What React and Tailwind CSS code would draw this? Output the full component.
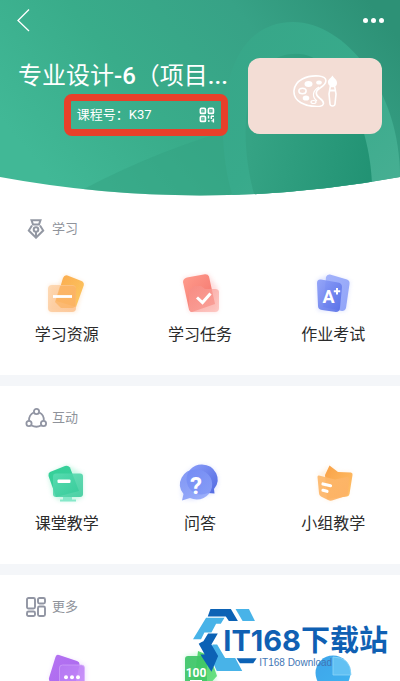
function HeaderBackground() {
  return (
    <svg
      className="absolute inset-0 h-full w-full"
      viewBox="0 0 400 198"
      preserveAspectRatio="none"
      aria-hidden="true"
    >
      <defs>
        <linearGradient id="base" x1="0" y1="0.6" x2="1" y2="0.2">
          <stop offset="0" stopColor="#41b896" />
          <stop offset="0.35" stopColor="#39ac8a" />
          <stop offset="0.7" stopColor="#37a286" />
          <stop offset="1" stopColor="#2d9176" />
        </linearGradient>
        <linearGradient id="arch" x1="0" y1="0" x2="1" y2="1">
          <stop offset="0" stopColor="#37a688" />
          <stop offset="0.5" stopColor="#38aa8b" />
          <stop offset="1" stopColor="#48af93" />
        </linearGradient>
        <linearGradient id="hole" x1="0" y1="0.8" x2="1" y2="1">
          <stop offset="0" stopColor="#35a384" />
          <stop offset="1" stopColor="#219273" />
        </linearGradient>
        <clipPath id="curve">
          <path d="M0 0H400V178Q300 196.500 200 196.500T0 178Z" />
        </clipPath>
      </defs>
      <g clipPath="url(#curve)">
        <rect width="400" height="198" fill="url(#base)" />
        <path d="M84 190Q160 150 240 128V198H84Z" fill="#33a281" opacity="0.5" />
        <path
          d="M233 198C214 140 216 22 293 22C345 22 400 90 400 178V198Z"
          fill="url(#arch)"
        />
        <path
          d="M255 198C240 150 236 54 296 54C340 54 374 130 372 198Z"
          fill="url(#hole)"
        />
      </g>
    </svg>
  )
}

function BackIcon() {
  return (
    <svg className="h-6 w-4" viewBox="0 0 16 24" fill="none" stroke="#fff" strokeWidth="1.300" aria-hidden="true">
      <path d="M13 1.500L2 12.500L13 23" />
    </svg>
  )
}

function QrIcon() {
  return (
    <svg className="h-4 w-4" viewBox="0 0 16 16" fill="none" stroke="#fff" strokeWidth="1.700" aria-hidden="true">
      <rect x="1.400" y="1.400" width="5" height="5" rx="1" />
      <rect x="9.400" y="1.400" width="5" height="5" rx="1" />
      <rect x="1.400" y="9.400" width="5" height="5" rx="1" />
      <path d="M3.400 3.900h1M11.400 3.900h1M3.400 11.900h1" strokeWidth="1" />
      <path d="M9.500 8.500v3M12 9.300h3M12.300 9v3M9 14h1.600M12.500 13.800h1M14.400 11.500v4" strokeWidth="1.400" />
    </svg>
  )
}

function PaletteIcon() {
  return (
    <svg className="h-8 w-11" viewBox="0 0 44 32" fill="none" stroke="#fff" strokeWidth="1.600" aria-hidden="true">
      <path d="M26 1C14 0 2 5 1 15.500C0 27 13 31.500 24 31.500C32 31.500 32 27 27 23.500C22 20 22 16 27 13C35 8 35 2 26 1Z" />
      <path d="M26 12C19 16 19 22 24 26" strokeWidth="1.200" />
      <ellipse cx="15.500" cy="9" rx="4" ry="3" fill="#fff" stroke="none" />
      <ellipse cx="26" cy="7.500" rx="2.800" ry="2" fill="#fff" stroke="none" />
      <ellipse cx="9.500" cy="16" rx="3.600" ry="2.700" />
      <ellipse cx="13" cy="23" rx="3.300" ry="2.600" fill="#fff" stroke="none" />
      <ellipse cx="20.500" cy="27" rx="2.500" ry="1.500" strokeWidth="1.200" />
      <path d="M39.500 0.500C37 4 34.500 4.500 35 8Q35.500 11 37.500 11.500H41.500Q44 11 44 8C44 4.500 41.500 4 39.500 0.500Z" fill="#fff" stroke="none" />
      <path d="M37.300 11.500L36 19L37 29Q37.300 31 39.500 31T42 29L43 19L41.700 11.500Z" />
      <path d="M36.500 15.500H42.500" strokeWidth="2" />
    </svg>
  )
}

function PenIcon() {
  return (
    <svg className="h-5 w-5" viewBox="0 0 20 20" fill="none" stroke="#9398a3" strokeWidth="2" aria-hidden="true">
      <path d="M5.500 1.200H14.500L13 5.500H7Z" />
      <path d="M6 6.500L2.800 11.500L10 18.700L17.200 11.500L14 6.500" />
      <circle cx="10" cy="10.500" r="2.300" />
      <path d="M10 13V18" />
    </svg>
  )
}

function ShareIcon() {
  return (
    <svg className="h-5 w-5 overflow-visible" viewBox="0 0 20 20" fill="none" stroke="#9195a3" strokeWidth="1.800" aria-hidden="true">
      <circle cx="10.500" cy="3.500" r="2.600" />
      <circle cx="3" cy="15.500" r="2.600" />
      <circle cx="17.500" cy="15.500" r="2.600" />
      <path d="M7.700 4.500C4.500 6 3 9 3 12.500M13.300 4.500C16.500 6 18 9 17.800 12.500M5.500 17.500Q10.500 20 15 17.500" />
    </svg>
  )
}

function GridIcon() {
  return (
    <svg className="h-5 w-5" viewBox="0 0 20 20" fill="none" stroke="#9195a3" strokeWidth="1.900" aria-hidden="true">
      <rect x="1" y="1" width="8" height="10.500" rx="1.500" />
      <rect x="12" y="1" width="7" height="5.500" rx="1.500" />
      <rect x="1" y="14.500" width="8" height="4.500" rx="1.500" />
      <rect x="12" y="9.500" width="7" height="9.500" rx="1.500" />
    </svg>
  )
}

// common frame of the coloured tile icons
function Tile({ children }) {
  return (
    <svg className="h-10 w-10 overflow-visible" viewBox="0 0 40 40" fill="none" aria-hidden="true">
      {children}
    </svg>
  )
}

function Gradient({ id, from, to }) {
  return (
    <linearGradient id={id} x1="0" y1="0" x2="1" y2="1">
      <stop offset="0" stopColor={from} />
      <stop offset="1" stopColor={to} />
    </linearGradient>
  )
}

// soft coloured halo behind the tiles
function Glow({ color, d }) {
  return <path d={d} fill={color} opacity="0.350" className="blur-[2px]" />
}

function ResourceIcon() {
  return (
    <Tile>
      <defs>
        <Gradient id="res1" from="#fba94e" to="#fccb62" />
        <Gradient id="res2" from="#fdcfa0" to="#fbb77d" />
      </defs>
      <Glow color="#fdba74" d="M2 11H12L18 1L37 9L29 38H2Z" />
      <path d="M20.500 1.500L34.500 7Q37.500 8.500 36.700 11.500L29 33L9 27L16 4Q17.500 0.500 20.500 1.500Z" fill="url(#res1)" />
      <rect x="1" y="11" width="28" height="27" rx="4" fill="url(#res2)" opacity="0.700" />
      <path d="M13 12L8 28L14 34H25Q28 34 28.500 31L29 14Q28 12 26 12Z" fill="#fbad55" opacity="0.600" />
      <path d="M6 22.500H25" stroke="#fff" strokeWidth="2.800" />
    </Tile>
  )
}

function TaskIcon() {
  return (
    <Tile>
      <defs>
        <Gradient id="task1" from="#ff9c8c" to="#f2716b" />
        <Gradient id="task2" from="#f68a82" to="#fdb9b2" />
      </defs>
      <Glow color="#fca5a5" d="M3 4L28 0L38 14V38H9Z" />
      <path d="M7 3.500L25 0.200Q28 0 29 2.500L35 30L12 38Q10 38 9 35.500L3 8Q3 4.500 7 3.500Z" fill="url(#task1)" />
      <path d="M14 12H21L25 15H35Q39 15 39 18V34Q39 38 35 38H13Q9 38 9 34V17Z" fill="url(#task2)" opacity="0.700" />
      <path d="M17 23.500L22.500 28.500L30.500 19.500" stroke="#fff" strokeWidth="3" />
    </Tile>
  )
}

function ExamIcon() {
  return (
    <Tile>
      <defs>
        <Gradient id="exam1" from="#a5b4fb" to="#8fa3f8" />
        <Gradient id="exam2" from="#8c9ef8" to="#526be5" />
      </defs>
      <Glow color="#a5b4fc" d="M4 6L15 1L37 7L33 37H5Z" />
      <path d="M17 0.500L34 5.500Q37 6.500 36.500 10L33 34Q32 37 29 37L10 33L13 3Q14 0 17 0.500Z" fill="url(#exam1)" />
      <path d="M8 5.500L25 8.500Q29 9 29 13L27 34Q26.500 38 23 38L9 36Q5 35.500 5 32L4 9Q4 5 8 5.500Z" fill="url(#exam2)" opacity="0.900" />
      <text x="9.500" y="29" fill="#fff" fontSize="18" fontWeight="700" fontFamily="Roboto, sans-serif">A</text>
      <path d="M24 14V20.500M20.800 17.200H27.200" stroke="#fff" strokeWidth="2" />
    </Tile>
  )
}

function ClassIcon() {
  return (
    <Tile>
      <defs>
        <Gradient id="cls1" from="#35d098" to="#3bcf9e" />
        <Gradient id="cls2" from="#5bddb3" to="#35c998" />
      </defs>
      <Glow color="#6ee7b7" d="M1 11L20 2L36 11V34L28 38H13L6 33Z" />
      <path d="M3 9L18 3Q21 2 23 4.500L32 28L9 34L1.500 13Q1 10 3 9Z" fill="url(#cls1)" />
      <rect x="6" y="10.500" width="30" height="23.500" rx="3" fill="url(#cls2)" opacity="0.850" />
      <path d="M16 34H25V36.500H29V38.500H13V36.500H16Z" fill="#86e8c9" />
      <rect x="10.500" y="16.500" width="13" height="3.500" rx="1" fill="#fff" />
    </Tile>
  )
}

function QuestionIcon() {
  return (
    <Tile>
      <defs>
        <Gradient id="qa1" from="#8da0fa" to="#5068e0" />
        <Gradient id="qa2" from="#6d86f2" to="#93a8fb" />
      </defs>
      <Glow color="#a5b4fc" d="M2 36L1 20Q8 2 24 2Q38 4 38 20L34 30L14 37Z" />
      <path d="M22 1.500A16 15 0 0 1 34 26L34.500 30.500L28 30A15 15 0 1 1 22 1.500Z" fill="url(#qa1)" />
      <path d="M16 6.500A15.500 15 0 1 1 10 35L2 37.500L3.500 31A15.500 15 0 0 1 16 6.500Z" fill="url(#qa2)" opacity="0.850" />
      <text x="10" y="31" fill="#fff" fontSize="24" fontWeight="700" fontFamily="Roboto, sans-serif">?</text>
    </Tile>
  )
}

function GroupIcon() {
  return (
    <Tile>
      <defs>
        <Gradient id="grp1" from="#f9a146" to="#ffc26b" />
        <Gradient id="grp2" from="#fdb96c" to="#fdb164" />
      </defs>
      <Glow color="#fed7aa" d="M5 12L17 3L25 9L39 10L35 32L17 38L6 32Z" />
      <path d="M16.500 2.500L25 9L38 9.500Q40 10 39.500 12L36.500 31Q36 33 34 33.500L14 36L12 12Z" fill="url(#grp1)" />
      <path d="M6 12.500L22 16.500L34 14Q36 14 36 16L35 30Q35 32 33 33L19 37.500Q17 38 15 37L8 33.500Q6 32.500 6 30L4.500 14Q4.500 12 6 12.500Z" fill="url(#grp2)" opacity="0.920" />
      <path d="M10 21L17.500 22.700M10 27.300L14 28.300" stroke="#fff" strokeWidth="3.200" strokeLinecap="round" />
    </Tile>
  )
}

function MessageIcon() {
  return (
    <Tile>
      <defs>
        <Gradient id="msg1" from="#b573f2" to="#a968ee" />
        <Gradient id="msg2" from="#b57af3" to="#c98cfb" />
      </defs>
      <Glow color="#d8b4fe" d="M2 27L9 3L32 10L39 14V40H12Z" />
      <path d="M12 3L30 9Q33 10 32.500 13L27 38L4 30Q1.500 29 2 26L8.500 5Q9.500 2 12 3Z" fill="url(#msg1)" />
      <rect x="12.500" y="13" width="25" height="27" rx="3" fill="url(#msg2)" stroke="#d4a9fb" strokeWidth="0.700" opacity="0.900" />
      <g fill="#fff">
        <circle cx="19" cy="25.300" r="2" />
        <circle cx="25" cy="25.300" r="2" />
        <circle cx="31" cy="25.300" r="2" />
      </g>
    </Tile>
  )
}

function ScoreIcon() {
  return (
    <Tile>
      <defs>
        <Gradient id="score1" from="#4fd56d" to="#6be184" />
        <Gradient id="score2" from="#3cc468" to="#43c966" />
      </defs>
      <Glow color="#86efac" d="M5 4L22 0L36 20V40H5Z" />
      <path d="M18 -1L30 4L37 24L28 34L14 30Z" fill="url(#score1)" />
      <rect x="5" y="4" width="22" height="36" rx="3" fill="url(#score2)" opacity="0.920" />
      <text x="16" y="25" fill="#fff" fontSize="12" fontWeight="700" textAnchor="middle" fontFamily="'Liberation Sans Narrow', Roboto, sans-serif">100</text>
      <rect x="10" y="28" width="12" height="3" fill="#fff" />
    </Tile>
  )
}

function ChartIcon() {
  return (
    <Tile>
      <defs>
        <Gradient id="chart1" from="#3fa5ea" to="#3fb3f0" />
      </defs>
      <circle cx="20" cy="21" r="17.500" fill="url(#chart1)" />
      <path d="M20 5Q38 5 38 23H20Z" fill="#62c1f3" stroke="#8ed5f8" strokeWidth="0.800" />
    </Tile>
  )
}

const sections = [
  {
    title: "学习",
    icon: <PenIcon />,
    items: [
      { label: "学习资源", icon: <ResourceIcon /> },
      { label: "学习任务", icon: <TaskIcon /> },
      { label: "作业考试", icon: <ExamIcon /> },
    ],
  },
  {
    title: "互动",
    icon: <ShareIcon />,
    items: [
      { label: "课堂教学", icon: <ClassIcon /> },
      { label: "问答", icon: <QuestionIcon /> },
      { label: "小组教学", icon: <GroupIcon /> },
    ],
  },
  {
    title: "更多",
    icon: <GridIcon />,
    items: [{ icon: <MessageIcon /> }, { icon: <ScoreIcon /> }, { icon: <ChartIcon /> }],
  },
]

function Section({ title, icon, items }) {
  return (
    <section className="border-b-[11px] border-[#f4f6f9] pt-5 pb-7">
      <h2 className="flex h-6 items-center gap-1.5 pl-[26px] text-[13px] text-[#8f939b]">
        {icon}
        {title}
      </h2>
      <div className="mt-[33px] grid grid-cols-3">
        {items.map((item, index) => (
          <a key={index} href="#" className="flex flex-col items-center gap-[9px] text-base leading-6 text-[#2b2b2b]">
            {item.icon}
            {item.label && <span>{item.label}</span>}
          </a>
        ))}
      </div>
    </section>
  )
}

function Watermark() {
  return (
    <div className="absolute right-3 bottom-2 flex items-end">
      <svg className="-mr-9 h-[66px] w-[67px]" viewBox="20 18 200 197" aria-hidden="true">
        {/* light blades */}
        <path d="M62 50H117L106 68H92L78 94H57L47 114H23Z" fill="#48b3e8" />
        <path d="M150 24H190L208 60H171Z" fill="#48b3e8" />
        <path d="M81 130H95L119 170H149L170 209H94L74 166Z" fill="#48b3e8" />
        {/* dark blades */}
        <path d="M75 24H136L157 60H130L121 46H67Z" fill="#0c62b5" />
        <path d="M68 97H97L78 130L98 164L78 211L45 160H58L40 128Q48 122 54 120Z" fill="#0c62b5" />
        <path d="M153 171H213L203 186H163Z" fill="#0c62b5" />
      </svg>
      <div className="relative flex flex-col pb-1 font-[Inter,'Noto_Sans_CJK_SC',sans-serif]">
        <span className="text-[29px] leading-8 font-bold text-[#0f60b3]">IT168下载站</span>
        <span className="pl-9 text-[10px] leading-3 text-[#3f76b5] font-['Liberation_Sans',sans-serif]">IT168 Download</span>
      </div>
    </div>
  )
}

function App() {
  return (
    <div className="relative h-screen overflow-hidden bg-white font-[Roboto,'Noto_Sans_CJK_SC',sans-serif]">
      <header className="relative h-[197px] text-white">
        <HeaderBackground />
        <div className="relative flex h-10 items-center justify-between px-4">
          <button aria-label="返回" className="flex items-center">
            <BackIcon />
          </button>
          <button aria-label="更多" className="flex gap-[3px]">
            <span className="h-[5px] w-[5px] rounded-full bg-white" />
            <span className="h-[5px] w-[5px] rounded-full bg-white" />
            <span className="h-[5px] w-[5px] rounded-full bg-white" />
          </button>
        </div>
        <div className="relative mt-[18px] flex items-start justify-between pr-[18px] pl-[18px]">
          <div className="flex flex-col items-end">
            <h1 className="text-2xl leading-9 font-normal whitespace-nowrap">
              专业设计<span className="font-medium">-6</span>（项目<span className="font-medium">...</span>
            </h1>
            <div className="flex h-[42px] w-[164px] items-center justify-between rounded-lg border-[7px] border-[#e8402a] px-1.5 text-[13px]">
              <span>课程号：K37</span>
              <QrIcon />
            </div>
          </div>
          <div className="flex h-[76px] w-[134px] justify-center rounded-xl bg-[#f3ddd5] pt-[17px]">
            <PaletteIcon />
          </div>
        </div>
      </header>
      <main>
        {sections.map((section) => (
          <Section key={section.title} {...section} />
        ))}
      </main>
      <Watermark />
    </div>
  )
}

export default App
